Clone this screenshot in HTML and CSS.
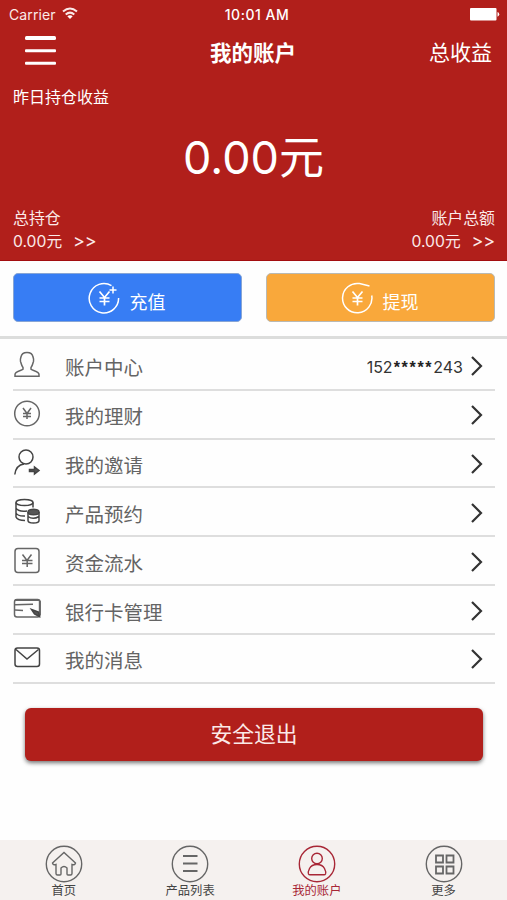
FILE: index.html
```html
<!DOCTYPE html>
<html lang="zh-CN">
<head>
<meta charset="utf-8">
<meta name="viewport" content="width=device-width, initial-scale=1">
<title>我的账户</title>
<link rel="stylesheet" href="styles.css">
</head>
<body>
<div class="app">
  <header class="hero">
    <div class="status">
      <div class="carrier"><span>Carrier</span>
        <svg width="16" height="13" viewBox="0 0 16 13" fill="none" stroke="#fbeae9" stroke-width="2"><path d="M1 4.500Q8-1.500 15 4.500M3.700 7.500Q8 3.800 12.300 7.500"/><path d="M8 12L5.300 9.300Q8 7.200 10.700 9.300Z" fill="#fff" stroke="none"/></svg>
      </div>
      <time class="clock">10:01 AM</time>
      <svg class="battery" width="30" height="13" viewBox="0 0 30 13" fill="#fff"><rect width="26.500" height="12.500" rx="1"/><path d="M27.500 4q1.700.5 1.700 2.300T27.500 8.700z"/></svg>
    </div>
    <nav class="topbar">
      <svg class="menu" width="31" height="30" viewBox="0 0 31 30" fill="#fff"><rect width="31" height="4" rx="1.500"/><rect y="13.300" width="31" height="3" rx="1"/><rect y="25.700" width="31" height="3" rx="1"/></svg>
      <h1>我的账户</h1>
      <a class="profit">总收益</a>
    </nav>
    <p class="yesterday">昨日持仓收益</p>
    <p class="amount">0.00<span>元</span></p>
    <div class="totals">
      <div><p>总持仓</p><p class="value">0.00元<span>&gt;&gt;</span></p></div>
      <div class="right"><p>账户总额</p><p class="value">0.00元<span>&gt;&gt;</span></p></div>
    </div>
  </header>

  <section class="actions">
    <button class="action recharge">
      <svg width="32" height="32" viewBox="0 0 32 32"><path d="M23.500 3.700A14.700 14.700 0 1 0 30.600 16M25 4.500v7M21.500 8h7"/><path class="yen" d="M11.500 9.500l5 6 5-6M11.500 16h10M11.500 19.500h10M16.500 15.500v8"/></svg>
      <span>充值</span>
    </button>
    <button class="action withdraw">
      <svg width="32" height="32" viewBox="0 0 32 32"><path d="M28.500 4L18.500 1.600A14.700 14.700 0 1 0 30.700 13.500"/><path class="yen" d="M11.500 9.500l5 6 5-6M11.500 16h10M11.500 19.500h10M16.500 15.500v8"/></svg>
      <span>提现</span>
    </button>
  </section>

  <ul class="list">
    <li><svg class="icon" viewBox="0 0 28 28"><path d="M10 16.500C8.300 14.700 8.300 12 7.500 10.500 7 8 7.700 7 8 6 8.500 2.500 11 1.500 14 1.500S19.500 2.500 20 6c.3 1 1 2 .5 4.500-.8 1.500-.8 4.200-2.500 6v1.700c2 1.800 8 1.800 8 5.300v1.700H2v-1.700C2 20 8 20 10 18.200z"/></svg><span class="label">账户中心</span><span class="phone">152<b>*****</b>243</span><svg class="chev" viewBox="0 0 12 20"><path d="M1 1l9 9-9 9"/></svg></li>
    <li><svg class="icon" viewBox="0 0 28 28"><circle cx="14" cy="13.500" r="12.300"/><path d="M10 8l4 5.500L18 8M10 13.500h8M10 16.500h8M14 13.500V19"/></svg><span class="label">我的理财</span><svg class="chev" viewBox="0 0 12 20"><path d="M1 1l9 9-9 9"/></svg></li>
    <li><svg class="icon dark" viewBox="0 0 28 28"><circle cx="13" cy="8" r="7"/><path d="M1.800 25.500Q3 16 11 15"/><path class="fill" d="M16.500 20.500h5V18l4.500 3.500-4.500 3.500v-2.500h-5z"/></svg><span class="label">我的邀请</span><svg class="chev" viewBox="0 0 12 20"><path d="M1 1l9 9-9 9"/></svg></li>
    <li><svg class="icon dark" viewBox="0 0 28 28"><ellipse cx="11.500" cy="4.500" rx="8.500" ry="3"/><path d="M3 4.500v14.500q1.500 3.500 9 3.500M20 4.500V9.500M3 10q2 4 11 3M3 15q2 3.500 9 3"/><ellipse cx="20.500" cy="14" rx="5.500" ry="2.800" class="fill"/><path d="M15 14v8.500q0 2.500 5.500 2.500T26 22.500V14M15 18.500q5 3.500 11 0"/></svg><span class="label">产品预约</span><svg class="chev" viewBox="0 0 12 20"><path d="M1 1l9 9-9 9"/></svg></li>
    <li><svg class="icon" viewBox="0 0 28 28"><rect x="2" y="1.500" width="24" height="24" rx="3"/><path d="M9.500 7.500l4.500 6 4.500-6M9 13.500h10.500M9 16.500h10.500M14.200 13.500V20"/></svg><span class="label">资金流水</span><svg class="chev" viewBox="0 0 12 20"><path d="M1 1l9 9-9 9"/></svg></li>
    <li><svg class="icon" viewBox="0 0 28 28"><rect x="1.500" y="3.500" width="25.500" height="17.500" rx="2.500"/><path d="M2 4h24M26.800 5v14" stroke-width="2"/><path d="M2 8.800l18-.5M2 14l8 .4"/><path class="fill" d="M18.500 13.500l7 2.500 1 4.500-5-2.500z" stroke="#444"/></svg><span class="label">银行卡管理</span><svg class="chev" viewBox="0 0 12 20"><path d="M1 1l9 9-9 9"/></svg></li>
    <li><svg class="icon dark" viewBox="0 0 28 28"><rect x="2" y="4" width="24.500" height="18.500" rx="2.500"/><path d="M3 5.500l11 9.500 11.500-9.500"/></svg><span class="label">我的消息</span><svg class="chev" viewBox="0 0 12 20"><path d="M1 1l9 9-9 9"/></svg></li>
  </ul>

  <button class="logout">安全退出</button>

  <footer class="tabs">
    <a class="tab"><svg viewBox="0 0 38 38"><circle cx="19" cy="19" r="17.700"/><path d="M7.500 18L19 7.500 30.500 18q-.5 2.500-3.500 1.500v9q0 1.500-1.500 1.500H23q-1 0-1-1v-6q-3-3-6 0v6q0 1-1 1h-2.500q-1.500 0-1.500-1.500v-9q-3 1-3.500-1.500z"/></svg><span>首页</span></a>
    <a class="tab"><svg viewBox="0 0 38 38"><circle cx="19" cy="19" r="17.700"/><path d="M12 11h14.500M12 18.500h14.500M12 26h14.500" stroke-width="2"/></svg><span>产品列表</span></a>
    <a class="tab active"><svg viewBox="0 0 38 38"><circle cx="19" cy="19" r="17.700"/><circle cx="19" cy="13.500" r="5.300"/><path d="M10.500 29q-.8-2 1-5.500 2-4 7.500-4t7.500 4q1.800 3.500 1 5.500-.4.800-1.500.8H12q-1.100 0-1.500-.8z"/></svg><span>我的账户</span></a>
    <a class="tab"><svg viewBox="0 0 38 38"><circle cx="19" cy="19" r="17.700"/><path d="M11 10.500h7v7h-7zM21.500 10.500h7v7h-7zM11 21.500h7v7h-7zM21.500 21.500h7v7h-7z" stroke-width="1.800"/></svg><span>更多</span></a>
  </footer>
</div>
</body>
</html>
```
FILE: styles.css
```css
* { box-sizing: border-box; }
body, h1, p, ul { margin: 0; padding: 0; }
body { font-family: Inter, "Noto Sans CJK SC", sans-serif; background: #fff; }
button { border: 0; font-family: inherit; padding: 0; }
.app { width: 507px; height: 900px; display: flex; flex-direction: column; overflow: hidden; background: #fefefe; }
.hero { height: 261px; flex: none; background: #b11f1b; border-bottom: 1px solid #a30d10; color: #fff; display: flex; flex-direction: column; }
.status { height: 28px; display: grid; grid-template-columns: 1fr auto 1fr; align-items: center; padding: 0 7px 0 9px; font-size: 14px; color: #fbeae9; }
.carrier { display: flex; align-items: center; gap: 6px; }
.carrier svg { margin-top: -2px; }
.carrier span { letter-spacing: .1px; }
.clock { font-size: 14px; font-weight: 500; color: #fff; letter-spacing: .5px; margin-left: 5px; }
.battery { justify-self: end; }
.topbar { height: 48px; display: grid; grid-template-columns: 1fr auto 1fr; align-items: center; padding: 0 15px 0 14px; }
.menu { margin: -2px 0 0 11px; }
.topbar h1 { font-size: 21.500px; line-height: 30px; font-weight: 700; margin-top: 2px; }
.profit { justify-self: end; font-size: 21px; line-height: 30px; margin-top: 2px; }
.yesterday { margin: 9px 0 0 13px; font-size: 16px; line-height: 24px; }
.amount { margin-top: 19px; text-align: center; font-size: 45px; line-height: 60px; }
.amount span { font-size: 45px; }
.totals { margin-top: 20px; padding: 0 12px 0 13px; display: flex; justify-content: space-between; font-size: 15.900px; line-height: 22px; color: #fbeae9; }
.right { text-align: right; }
.value { font-size: 15.700px; white-space: nowrap; }
.value span { margin-left: 11px; font-size: 18px; letter-spacing: -.2px; }
.actions { height: 78px; flex: none; padding: 12px 12px 0 13px; display: grid; grid-template-columns: 1fr 1fr; gap: 24px; border-bottom: 3px solid #dcdddc; }
.action { height: 49px; border-radius: 5px; border: 1px solid #b9b9b3; color: #fff; font-size: 18px; display: flex; align-items: center; justify-content: center; gap: 10px; padding-right: 2px; }
.action svg { fill: none; stroke: #fff; stroke-width: 1.500; }
.action .yen { stroke-width: 1.700; }
.action span { line-height: 24px; margin-top: 11px; }
.recharge { background: #377df4; border-color: #87a5d5; }
.withdraw { background: #f9a83b; }
.list { flex: none; list-style: none; margin: 3px 12px 0 13px; display: grid; grid-auto-rows: 48.830px; }
.list li { display: flex; align-items: center; border-bottom: 2px solid #dedede; padding-right: 12px; }
.icon { width: 28px; height: 28px; margin-top: 0; flex: none; fill: none; stroke: #666; stroke-width: 1.500; }
.icon.dark { stroke: #444; }
.icon .fill { fill: #555; }
.label { margin-left: 24px; margin-top: 6px; font-size: 19.500px; line-height: 28px; color: #646464; flex: 1; }
.phone { font-size: 16px; line-height: 22px; margin: 5px 8px 0 0; color: #333; }
.phone b { font-family: "Liberation Sans", sans-serif; font-weight: 700; letter-spacing: 1.700px; margin-left: 1px; color: #222; }
.chev { width: 12px; height: 20px; margin-top: 2px; fill: none; stroke: #333; stroke-width: 2.200; }
.logout { flex: none; margin: 24px 24px 0 25px; height: 53px; border-radius: 6px; background: #b11f1b; box-shadow: 0 2px 4px rgba(0,0,0,.55); color: #fbe9e8; font-size: 21.800px; padding-bottom: 3px; }
.tabs { margin-top: auto; flex: none; height: 60px; padding: 5px 0 0; background: #f5f1ef; display: grid; grid-template-columns: repeat(4, 1fr); }
.tab { display: flex; flex-direction: column; align-items: center; color: #444; font-size: 12.300px; }
.tab:first-child { padding-left: 1px; }
.tab svg { width: 38px; height: 38px; fill: none; stroke: #666; stroke-width: 1.400; }
.tab span { line-height: 16px; }
.tab.active { color: #a82736; }
.tab.active svg { stroke: #a82736; }
```
